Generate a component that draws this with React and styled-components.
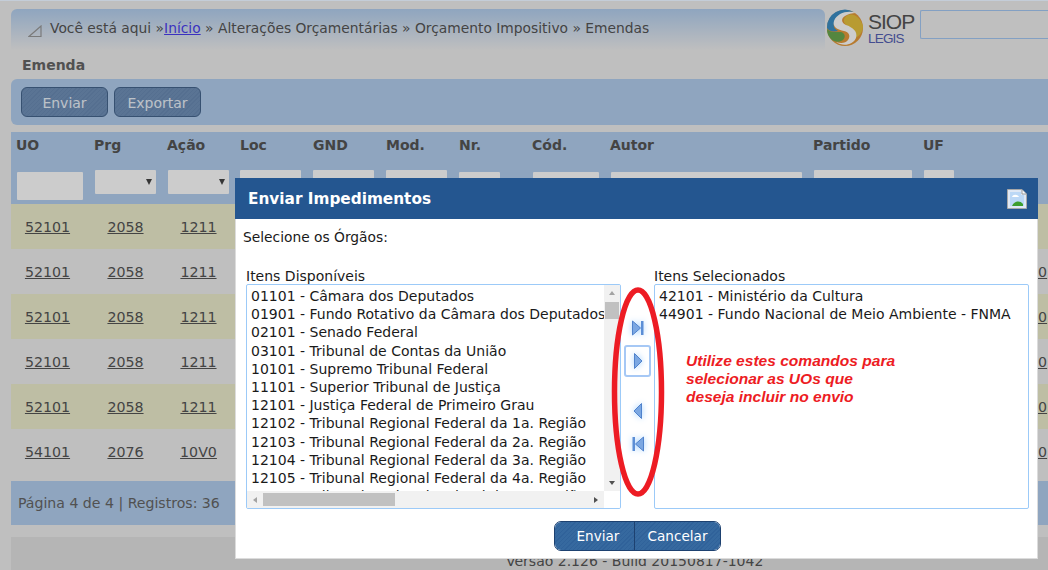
import React from 'react';
import styled, { createGlobalStyle } from 'styled-components';

const GlobalStyle = createGlobalStyle`
  html, body {
    margin: 0;
    padding: 0;
    background: #efefef;
    overflow: hidden;
  }
  * { box-sizing: border-box; }
`;

const uiFont = `"DejaVu Sans", Verdana, sans-serif`;

const COLUMNS = '78px 73px 73px 73px 73px 73px 73px 78px 203px 110px 102px 1fr';

const Page = styled.div`
  position: relative;
  width: 1048px;
  height: 570px;
  overflow: hidden;
  border-top: 1px solid #c4cdd8;
  padding-left: 11px;
  font-family: ${uiFont};
  font-size: 14px;
  color: #555;
`;

const TopRow = styled.div`
  display: flex;
  align-items: flex-start;
  margin-top: 8px;
  height: 41px;
`;

const Breadcrumb = styled.div`
  display: flex;
  align-items: center;
  flex: 0 0 814px;
  height: 41px;
  padding: 0 0 4px 17px;
  gap: 8px;
  border-radius: 6px 6px 0 0;
  background: linear-gradient(#b3cfef, #efefef);
  font-size: 13.83px;
  white-space: pre;
  svg { flex: none; margin-top: 6px; }
  a { color: #4a3ff0; text-decoration: underline; }
`;

const LogoBox = styled.div`
  display: flex;
  align-items: center;
  flex: 0 0 95px;
  padding-left: 1px;
  height: 38px;
`;

const LogoWords = styled.div`
  display: flex;
  flex-direction: column;
  margin-left: 4px;
  font-family: "Liberation Sans", Arial, sans-serif;
`;

const LogoTitle = styled.span`
  font-size: 21px;
  line-height: 20px;
  letter-spacing: -1px;
  color: #555;
`;

const LogoSub = styled.span`
  font-size: 13.5px;
  line-height: 13px;
  letter-spacing: -0.8px;
  color: #5561b4;
`;

const SearchBox = styled.div`
  flex: 1;
  height: 29px;
  margin-top: 1px;
  border: 1px solid #a4c8f4;
  border-right: none;
  border-radius: 2px 0 0 2px;
`;

const Heading = styled.div`
  height: 29px;
  padding: 6px 0 0 11px;
  font-size: 14px;
  line-height: 18px;
  font-weight: 700;
  color: #666;
`;

const Toolbar = styled.div`
  display: flex;
  gap: 6px;
  height: 46px;
  padding: 8px 10px;
  border-radius: 6px 0 0 6px;
  background: #b3cfef;
`;

const hatch = (base, line) => `repeating-linear-gradient(135deg, ${base} 0 2px, ${line} 2px 3px)`;

const ToolButton = styled.button`
  width: ${p => p.$w}px;
  height: 30px;
  padding: 1px 0 0;
  border: 1px solid #45668e;
  border-radius: 6px;
  background: ${hatch('#7191ba', '#6b8bb4')};
  color: #ecf3fb;
  font: 14px ${uiFont};
`;

const Table = styled.div`
  margin-top: 7px;
`;

const TableHead = styled.div`
  height: 72px;
  background: #b3cfef;
`;

const ColGrid = styled.div`
  display: grid;
  grid-template-columns: ${COLUMNS};
`;

const HeadCell = styled.div`
  padding: 5px 0 0 5px;
  height: 38px;
  font-size: 14px;
  line-height: 17px;
  font-weight: 700;
  color: #555;
`;

const FilterCell = styled.div`
  padding-left: ${p => p.$left || 5}px;
`;

const TextFilter = styled.div`
  width: ${p => p.$w}px;
  height: ${p => p.$h || 24}px;
  margin-top: ${p => p.$top || 0}px;
  background: #fff;
  border-radius: 1px;
`;

const SelectFilter = styled(TextFilter)`
  display: flex;
  align-items: center;
  justify-content: flex-end;
  padding-right: 3px;
`;

const Caret = styled.span`
  width: 0;
  height: 0;
  margin-right: 1px;
  border-left: 3px solid transparent;
  border-right: 3px solid transparent;
  border-top: 6px solid #444;
`;

const Row = styled(ColGrid)`
  height: 45px;
  align-items: center;
  background: ${p => (p.$odd ? '#eeeece' : 'transparent')};
`;

const RowCell = styled.a`
  justify-self: center;
  margin-right: ${p => p.$pull || 0}px;
  color: #555;
  font-size: 14.2px;
  text-decoration: underline;
`;

const LastCell = styled(RowCell)`
  grid-column: 12;
  justify-self: start;
`;

const Pager = styled.div`
  height: 44px;
  margin-top: 7px;
  padding: 14px 0 0 7px;
  background: #b3cfef;
  font-size: 14.1px;
  line-height: 17px;
  color: #666;
`;

const Footer = styled.div`
  height: 40px;
  margin-top: 12px;
  padding: 16px 0 0 495px;
  background: #e3e3e3;
  font-size: 14px;
  line-height: 17px;
  color: #555;
`;

const Overlay = styled.div`
  position: absolute;
  inset: -1px 0 0 0;
  background: rgba(0, 0, 0, 0.2);
`;

const Modal = styled.div`
  position: absolute;
  left: 235px;
  top: 177px;
  width: 803px;
  height: 381px;
  display: flex;
  flex-direction: column;
  background: #fff;
  border: 1px solid #dcdcdc;
  border-top: none;
  color: #1a1a1a;
`;

const ModalHeader = styled.div`
  display: flex;
  align-items: center;
  justify-content: space-between;
  flex: 0 0 41px;
  margin: 0 -1px 1px;
  padding: 0 11px 0 13px;
  background: #245690;
  color: #fff;
  font-size: 15.3px;
  font-weight: 700;
`;

const ModalBody = styled.div`
  flex: 1;
  padding: 8px 8px 0 7px;
`;

const Prompt = styled.div`
  height: 39px;
  font-size: 13.8px;
  line-height: 18px;
`;

const Lists = styled.div`
  display: grid;
  grid-template-columns: 375px 33px 375px;
  margin-left: 3px;
`;

const ListColumn = styled.div`
  display: flex;
  flex-direction: column;
`;

const ListLabel = styled.div`
  height: 17px;
  padding-top: 1px;
  font-size: 14px;
  line-height: 16px;
  white-space: nowrap;
`;

const ListBox = styled.div`
  display: grid;
  grid-template-columns: 1fr 16px;
  grid-template-rows: 1fr 17px;
  height: 225px;
  border: 1px solid #9ccaf8;
  border-radius: 2px;
  overflow: hidden;
`;

const ListItems = styled.div`
  grid-column: ${p => (p.$full ? '1 / 3' : '1')};
  grid-row: ${p => (p.$full ? '1 / 3' : '1')};
  overflow: hidden;
  padding: 2px 0 0 4px;
  font-size: 14px;
  line-height: 18.2px;
  white-space: nowrap;
`;

const VScroll = styled.div`
  display: flex;
  flex-direction: column;
  align-items: center;
  background: #f1f1f1;
`;

const HScroll = styled.div`
  display: flex;
  align-items: center;
  background: #f1f1f1;
`;

const VThumb = styled.div`
  width: 14px;
  height: 17px;
  margin-top: 7px;
  background: #c1c1c1;
`;

const HThumb = styled.div`
  width: 132px;
  height: 13px;
  margin-left: 6px;
  background: #c1c1c1;
`;

const ScrollArrow = styled.span`
  flex: none;
  width: 0;
  height: 0;
  ${p => p.$dir === 'up' && `margin-top: 6px; border: 3.5px solid transparent; border-top: none; border-bottom: 4px solid ${p.$dim ? '#a3a3a3' : '#505050'};`}
  ${p => p.$dir === 'down' && `margin-top: auto; margin-bottom: 6px; border: 3.5px solid transparent; border-bottom: none; border-top: 4px solid ${p.$dim ? '#a3a3a3' : '#505050'};`}
  ${p => p.$dir === 'left' && `margin-left: 6px; border: 3.5px solid transparent; border-left: none; border-right: 4px solid ${p.$dim ? '#a3a3a3' : '#505050'};`}
  ${p => p.$dir === 'right' && `margin-left: auto; margin-right: 6px; border: 3.5px solid transparent; border-right: none; border-left: 4px solid ${p.$dim ? '#a3a3a3' : '#505050'};`}
`;

const ScrollCorner = styled.div`
  background: #fff;
`;

const Mover = styled.div`
  display: flex;
  flex-direction: column;
  align-items: center;
  padding: 52px 0 0 0;
`;

const MoveButton = styled.button`
  display: flex;
  align-items: center;
  justify-content: center;
  width: 27px;
  height: ${p => p.$h}px;
  margin-bottom: ${p => p.$gap || 0}px;
  padding: 0;
  background: transparent;
  border: ${p => (p.$focus ? '2px solid #a6c8f5' : '1px solid transparent')};
  border-radius: 3px;
  svg { filter: drop-shadow(0 0 3px #a5d2ff); }
`;

const ModalActions = styled.div`
  display: flex;
  margin: 12px 0 0 311px;
  width: 167px;
  height: 30px;
  border: 1px solid #1d4170;
  border-radius: 7px;
  overflow: hidden;
`;

const ActionButton = styled.button`
  flex: ${p => p.$grow};
  padding: 0 0 0 ${p => (p.$split ? 7 : 0)}px;
  border: none;
  border-right: ${p => (p.$split ? '1px solid #1d4170' : 'none')};
  background: ${hatch('#36699f', '#30629a')};
  color: #fff;
  font: 13.6px ${uiFont};
`;

const Ellipse = styled.svg`
  position: absolute;
  left: 610px;
  top: 285px;
`;

const Hint = styled.div`
  position: absolute;
  left: 686px;
  top: 351px;
  font-family: "Liberation Sans", Arial, sans-serif;
  font-size: 15.55px;
  line-height: 18px;
  font-weight: 700;
  font-style: italic;
  color: #ed1c24;
  white-space: pre;
`;

const rows = [
  ['52101', '2058', '1211', ''],
  ['52101', '2058', '1211', '000'],
  ['52101', '2058', '1211', '300'],
  ['52101', '2058', '1211', '260'],
  ['52101', '2058', '1211', '500'],
  ['54101', '2076', '10V0', '500'],
];

const heads = ['UO', 'Prg', 'Ação', 'Loc', 'GND', 'Mod.', 'Nr.', 'Cód.', 'Autor', 'Partido', 'UF'];

const available = [
  '01101 - Câmara dos Deputados',
  '01901 - Fundo Rotativo da Câmara dos Deputados',
  '02101 - Senado Federal',
  '03101 - Tribunal de Contas da União',
  '10101 - Supremo Tribunal Federal',
  '11101 - Superior Tribunal de Justiça',
  '12101 - Justiça Federal de Primeiro Grau',
  '12102 - Tribunal Regional Federal da 1a. Região',
  '12103 - Tribunal Regional Federal da 2a. Região',
  '12104 - Tribunal Regional Federal da 3a. Região',
  '12105 - Tribunal Regional Federal da 4a. Região',
  '12106 - Tribunal Regional Federal da 5a. Região',
];

const selected = [
  '42101 - Ministério da Cultura',
  '44901 - Fundo Nacional de Meio Ambiente - FNMA',
];

function Logo() {
  return (
    <svg width="38" height="38" viewBox="0 0 38 38">
      <circle cx="19" cy="19" r="18" fill="#e59a3c" />
      <path d="M1 19A18 18 0 0 1 28 3C20 2 10 6 8 14C7 18 9 20 12 22C6 23 3 22 1 19Z" fill="#3d8fc6" />
      <path d="M22 6C28 4 34 8 37 17C37 24 32 29 26 30C29 25 28 20 22 17C17 15 16 9 22 6Z" fill="#e6c23f" />
      <path d="M1 20C4 24 10 23 15 23C19 24 20 28 17 31C13 34 8 33 5 30C2 27 1 24 1 20Z" fill="#6aa84f" />
      <path d="M30 4C22 1 11 4 8 12C6 18 12 21 18 22C23 23 25 27 22 31C20 34 15 35 10 33C17 38 27 36 30 29C32 22 26 18 20 16C15 14 15 9 19 7C22 5 26 4 30 4Z" fill="#fff" />
    </svg>
  );
}

function BrokenImage() {
  return (
    <svg width="20" height="20" viewBox="0 0 20 20">
      <path d="M0.5 0.5H15L19.5 5V19.5H0.5Z" fill="#dfe8f5" stroke="#a8a8a8" />
      <path d="M3 3H14V6H17V17H3Z" fill="#bcd8f6" />
      <path d="M5 8C6 5 10 5 12 8H5Z" fill="#fff" />
      <path d="M5 17C7 12 13 11 16 15V17Z" fill="#3e9e2e" />
      <path d="M15 1V5H19" fill="#fff" stroke="#999" />
    </svg>
  );
}

// shape = triangle + optional end bar, drawn pointing right and mirrored for the left ones
function MoveIcon({ left, bar }) {
  return (
    <svg width="14" height="18" viewBox="0 0 14 18" style={left ? { transform: 'scaleX(-1)' } : undefined}>
      <path
        d={bar ? 'M1.5 2L9.5 9L1.5 16Z' : 'M3.5 1.5L11 9L3.5 16.5Z'}
        fill="#7ba7e2"
        stroke="#4f82cc"
        strokeWidth="1"
      />
      {bar && <rect x="10" y="2" width="2.5" height="14" fill="#5b8ed6" />}
    </svg>
  );
}

export default function App() {
  return (
    <>
      <GlobalStyle />
      <Page>
        <TopRow>
          <Breadcrumb>
            <svg width="14" height="12" viewBox="0 0 14 12">
              <path d="M1 11.5H13V1Z" fill="none" stroke="#999" strokeWidth="1.2" />
            </svg>
            <span>
              Você está aqui »<a href="#inicio">Início</a> » Alterações Orçamentárias » Orçamento Impositivo » Emendas
            </span>
          </Breadcrumb>
          <LogoBox>
            <Logo />
            <LogoWords>
              <LogoTitle>SIOP</LogoTitle>
              <LogoSub>LEGIS</LogoSub>
            </LogoWords>
          </LogoBox>
          <SearchBox />
        </TopRow>

        <Heading>Emenda</Heading>

        <Toolbar>
          <ToolButton $w={87}>Enviar</ToolButton>
          <ToolButton $w={87}>Exportar</ToolButton>
        </Toolbar>

        <Table>
          <TableHead>
            <ColGrid>
              {heads.map(h => <HeadCell key={h}>{h}</HeadCell>)}
            </ColGrid>
            <ColGrid>
              <FilterCell $left={6}><TextFilter $w={66} $h={28} $top={2} /></FilterCell>
              <FilterCell $left={6}><SelectFilter $w={61}><Caret /></SelectFilter></FilterCell>
              <FilterCell $left={6}><SelectFilter $w={61}><Caret /></SelectFilter></FilterCell>
              <FilterCell><TextFilter $w={61} /></FilterCell>
              <FilterCell><TextFilter $w={61} /></FilterCell>
              <FilterCell><TextFilter $w={61} /></FilterCell>
              <FilterCell><TextFilter $w={41} $top={2} /></FilterCell>
              <FilterCell $left={6}><TextFilter $w={66} $top={2} /></FilterCell>
              <FilterCell $left={6}><TextFilter $w={191} $top={2} /></FilterCell>
              <FilterCell $left={6}><TextFilter $w={98} /></FilterCell>
              <FilterCell $left={6}><TextFilter $w={30} /></FilterCell>
            </ColGrid>
          </TableHead>
          {rows.map((r, i) => (
            <Row key={i} $odd={i % 2 === 0}>
              <RowCell $pull={5}>{r[0]}</RowCell>
              <RowCell>{r[1]}</RowCell>
              <RowCell>{r[2]}</RowCell>
              {r[3] && <LastCell>{r[3]}</LastCell>}
            </Row>
          ))}
        </Table>

        <Pager>Página 4 de 4 | Registros: 36</Pager>
        <Footer>Versão 2.126 - Build 20150817-1042</Footer>

        <Overlay />

        <Modal>
          <ModalHeader>
            <span>Enviar Impedimentos</span>
            <BrokenImage />
          </ModalHeader>
          <ModalBody>
            <Prompt>Selecione os Órgãos:</Prompt>
            <Lists>
              <ListColumn>
                <ListLabel>Itens Disponíveis</ListLabel>
                <ListBox>
                  <ListItems>
                    {available.map(a => <div key={a}>{a}</div>)}
                  </ListItems>
                  <VScroll>
                    <ScrollArrow $dir="up" $dim />
                    <VThumb />
                    <ScrollArrow $dir="down" />
                  </VScroll>
                  <HScroll>
                    <ScrollArrow $dir="left" $dim />
                    <HThumb />
                    <ScrollArrow $dir="right" />
                  </HScroll>
                  <ScrollCorner />
                </ListBox>
              </ListColumn>
              <Mover>
                <MoveButton $h={18} $gap={8}><MoveIcon bar /></MoveButton>
                <MoveButton $h={32} $focus $gap={25}><MoveIcon /></MoveButton>
                <MoveButton $h={18} $gap={15}><MoveIcon left /></MoveButton>
                <MoveButton $h={18}><MoveIcon left bar /></MoveButton>
              </Mover>
              <ListColumn>
                <ListLabel>Itens Selecionados</ListLabel>
                <ListBox>
                  <ListItems $full>
                    {selected.map(a => <div key={a}>{a}</div>)}
                  </ListItems>
                </ListBox>
              </ListColumn>
            </Lists>
            <ModalActions>
              <ActionButton $grow="0 0 80px" $split>Enviar</ActionButton>
              <ActionButton $grow="1">Cancelar</ActionButton>
            </ModalActions>
          </ModalBody>
        </Modal>

        <Ellipse width="56" height="212" viewBox="0 0 56 212">
          <ellipse cx="28" cy="106" rx="23.5" ry="102" fill="none" stroke="#ed1c24" strokeWidth="5.5" />
        </Ellipse>

        <Hint>{'Utilize estes comandos para\nselecionar as UOs que\ndeseja incluir no envio'}</Hint>
      </Page>
    </>
  );
}
